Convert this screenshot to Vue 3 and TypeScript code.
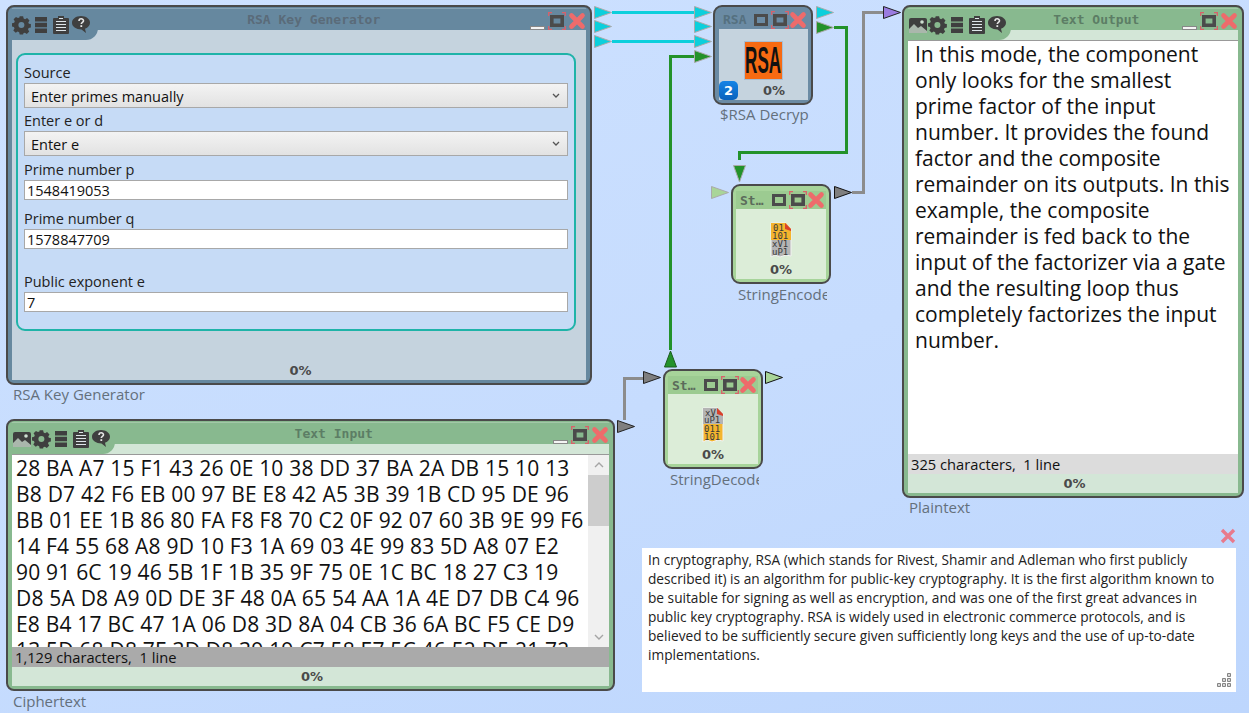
<template>
  <div class="canvas">
    <!-- wires and ports -->
    <svg class="wires" width="1249" height="713">
      <g fill="none" stroke-width="3">
        <path d="M612 12.5H694M612 41.5H694" stroke="#0ccfdc" />
        <path d="M670.5 350V56.5H694M834 27.5H846.5V152.5H739.5V160" stroke="#23922a" />
        <path d="M852 192.5H863.5V12.5H883M624.5 420V378.5H643" stroke="#8c8c8c" />
      </g>
      <polygon v-for="p in ports" :key="p.id" :points="p.points" :fill="p.fill" :stroke="p.stroke" stroke-width="1" />
    </svg>

    <!-- RSA Key Generator -->
    <section class="win blue key-win">
      <header class="win-head">
        <div class="tab">
          <svg class="ic"><use href="#i-gear" /></svg>
          <svg class="ic narrow"><use href="#i-bars" /></svg>
          <svg class="ic"><use href="#i-clip" /></svg>
          <svg class="ic wide"><use href="#i-help" /></svg>
        </div>
        <div class="title">RSA Key Generator</div>
        <div class="controls">
          <span class="min"></span>
          <svg class="ic ctl"><use href="#i-max" /></svg>
          <svg class="ic ctl"><use href="#i-close" /></svg>
        </div>
      </header>
      <div class="win-body">
        <div class="settings">
          <label>Source</label>
          <div class="select">Enter primes manually<svg width="8" height="6"><path d="M1 1l3 3 3-3" fill="none" stroke="#555" stroke-width="1.3" /></svg></div>
          <label>Enter e or d</label>
          <div class="select last">Enter e<svg width="8" height="6"><path d="M1 1l3 3 3-3" fill="none" stroke="#555" stroke-width="1.3" /></svg></div>
          <label>Prime number p</label>
          <div class="input">1548419053</div>
          <label>Prime number q</label>
          <div class="input">1578847709</div>
          <label class="spaced">Public exponent e</label>
          <div class="input">7</div>
        </div>
      </div>
      <footer class="progress">0%</footer>
    </section>
    <div class="caption key-cap">RSA Key Generator</div>

    <!-- Text Input -->
    <section class="win green input-win">
      <header class="win-head">
        <div class="tab">
          <svg class="ic"><use href="#i-image" /></svg>
          <svg class="ic"><use href="#i-gear" /></svg>
          <svg class="ic narrow"><use href="#i-bars" /></svg>
          <svg class="ic"><use href="#i-clip" /></svg>
          <svg class="ic wide"><use href="#i-help" /></svg>
        </div>
        <div class="title">Text Input</div>
        <div class="controls">
          <span class="min"></span>
          <svg class="ic ctl"><use href="#i-max" /></svg>
          <svg class="ic ctl"><use href="#i-close" /></svg>
        </div>
      </header>
      <div class="strip"></div>
      <div class="text-area">
        <div class="lines cipher">
          <div v-for="line in cipherLines" :key="line">{{ line }}</div>
        </div>
        <div class="scrollbar">
          <svg width="10" height="6" class="arrow"><path d="M1 5l4-4 4 4" fill="none" stroke="#a5a5a5" stroke-width="1.4" /></svg>
          <div class="track"><div class="thumb"></div></div>
          <svg width="10" height="6" class="arrow"><path d="M1 1l4 4 4-4" fill="none" stroke="#a5a5a5" stroke-width="1.4" /></svg>
        </div>
      </div>
      <div class="status dark">1,129 characters,&nbsp; 1 line</div>
      <footer class="progress">0%</footer>
    </section>
    <div class="caption input-cap">Ciphertext</div>

    <!-- Text Output -->
    <section class="win green output-win">
      <header class="win-head">
        <div class="tab">
          <svg class="ic"><use href="#i-image" /></svg>
          <svg class="ic"><use href="#i-gear" /></svg>
          <svg class="ic narrow"><use href="#i-bars" /></svg>
          <svg class="ic"><use href="#i-clip" /></svg>
          <svg class="ic wide"><use href="#i-help" /></svg>
        </div>
        <div class="title">Text Output</div>
        <div class="controls">
          <span class="min"></span>
          <svg class="ic ctl"><use href="#i-max" /></svg>
          <svg class="ic ctl"><use href="#i-close" /></svg>
        </div>
      </header>
      <div class="strip"></div>
      <div class="text-area output-text">
        <div class="lines">
          <div v-for="line in plainLines" :key="line">{{ line }}</div>
        </div>
      </div>
      <div class="status">325 characters,&nbsp; 1 line</div>
      <footer class="progress">0%</footer>
    </section>
    <div class="caption output-cap">Plaintext</div>

    <!-- RSA node -->
    <section class="node blue rsa-node">
      <header class="node-head">
        <span class="node-title">RSA</span>
        <svg class="ic box"><use href="#i-box" /></svg>
        <svg class="ic ctl"><use href="#i-max" /></svg>
        <svg class="ic ctl"><use href="#i-close" /></svg>
      </header>
      <div class="node-body">
        <div class="rsa-logo"><span>RSA</span></div>
        <span class="badge">2</span>
        <div class="pct">0%</div>
      </div>
    </section>
    <div class="caption node-cap rsa-cap">$RSA Decryp</div>

    <!-- StringEncoder node -->
    <section class="node green enc-node">
      <header class="node-head">
        <span class="node-title">St…</span>
        <svg class="ic box"><use href="#i-box" /></svg>
        <svg class="ic ctl"><use href="#i-max" /></svg>
        <svg class="ic ctl"><use href="#i-close" /></svg>
      </header>
      <div class="node-body">
        <svg class="file" width="22" height="36" viewBox="0 0 22 36">
          <path d="M1 1H16L21 7V34L16 33L10 35L5 33L1 35Z" fill="#b4b4b4" stroke="#f2f2f2" />
          <path d="M1 1H16L21 7V18H1Z" fill="#f4b52e" />
          <path d="M15 1L21 7V9L15 7Z" fill="#d9412b" />
          <g class="file-text"><text x="3" y="9">01</text><text x="2" y="17">101</text><text x="2" y="25">xV1</text><text x="2" y="33">uP1</text></g>
        </svg>
        <div class="pct">0%</div>
      </div>
    </section>
    <div class="caption node-cap enc-cap">StringEncoder</div>

    <!-- StringDecoder node -->
    <section class="node green dec-node">
      <header class="node-head">
        <span class="node-title">St…</span>
        <svg class="ic box"><use href="#i-box" /></svg>
        <svg class="ic ctl"><use href="#i-max" /></svg>
        <svg class="ic ctl"><use href="#i-close" /></svg>
      </header>
      <div class="node-body">
        <svg class="file" width="22" height="36" viewBox="0 0 22 36">
          <path d="M1 1H16L21 7V34L16 33L10 35L5 33L1 35Z" fill="#f4b52e" stroke="#f2f2f2" />
          <path d="M1 1H16L21 7V17H1Z" fill="#b4b4b4" />
          <path d="M15 1L21 7V9L15 7Z" fill="#d9412b" />
          <g class="file-text"><text x="3" y="9">xV</text><text x="2" y="16">uP1</text><text x="2" y="25">011</text><text x="2" y="33">101</text></g>
        </svg>
        <div class="pct">0%</div>
      </div>
    </section>
    <div class="caption node-cap dec-cap">StringDecoder</div>

    <!-- note -->
    <svg class="note-close" width="16" height="16" viewBox="0 0 16 16"><path d="M2 2l12 12M14 2L2 14" stroke="#e87a8c" stroke-width="3.4" /></svg>
    <div class="note">
      <div v-for="line in noteLines" :key="line">{{ line }}</div>
      <svg class="grip" width="14" height="14" viewBox="0 0 14 14">
        <path d="M10.500.5h3v3h-3zM5.500 5.500h3v3h-3zM10.500 5.500h3v3h-3zM.5 10.500h3v3h-3zM5.500 10.500h3v3h-3zM10.500 10.500h3v3h-3z" fill="#d8d8d8" stroke="#858585" />
      </svg>
    </div>

    <!-- icon sheet -->
    <svg width="0" height="0" class="sheet">
      <defs>
        <symbol id="i-gear" viewBox="0 0 20 20">
          <path fill-rule="evenodd" fill="#3f3f3f" d="M8 1h4l.6 2.6 1.700.7 2.300-1.400 2.800 2.800-1.400 2.300.7 1.700 2.300.3v4l-2.600.6-.7 1.700 1.400 2.300-2.800 2.800-2.300-1.400-1.700.7L12 22H8l-.6-2.600-1.700-.7-2.300 1.400L.6 17.300 2 15l-.7-1.700L-1 12.700V9l2.600-.6.7-1.700L.9 4.400 3.700 1.600 6 3l1.700-.7Z M10 7.500a3.500 3.500 0 1 0 0 7 3.500 3.500 0 0 0 0-7Z" transform="translate(.8 .5) scale(.86)" />
        </symbol>
        <symbol id="i-bars" viewBox="0 0 14 20">
          <path fill="#3f3f3f" d="M1 2h12v4.500H1zM1 7.700h12v4.500H1zM1 13.400h12v4.500H1z" />
        </symbol>
        <symbol id="i-clip" viewBox="0 0 20 20">
          <path fill="#3f3f3f" d="M3 3h4V1h6v2h4a1 1 0 0 1 1 1v14a1 1 0 0 1-1 1H3a1 1 0 0 1-1-1V4a1 1 0 0 1 1-1Z" />
          <path stroke="#dfe6ea" stroke-width="1" d="M5 6.500h10M5 9.500h10M5 12.500h10M5 15.500h10M8 3.500h4" />
        </symbol>
        <symbol id="i-help" viewBox="0 0 20 20">
          <path fill="#3f3f3f" d="M10 1c5 0 9 2.900 9 6.700 0 2.700-2 4.900-5 6l1 4.300-4.500-3.600C5 14.400 1 11.500 1 7.700 1 3.900 5 1 10 1Z" />
          <path fill="none" stroke="#e6e6e6" stroke-width="1.6" d="M8 6c0-3 4.500-2.800 4.500-.3 0 1.700-2.200 1.700-2.200 3.400" />
          <path fill="#e6e6e6" d="M9.400 10.200h1.800V12H9.400z" />
        </symbol>
        <symbol id="i-image" viewBox="0 0 20 20">
          <path fill="#3f3f3f" d="M1 5a2 2 0 0 1 2-2h14a2 2 0 0 1 2 2v13H1Z" />
          <path fill="#cfe0d2" d="M1 14l5-5 4 4 3-2 6 5v2H1Z" opacity=".75" />
          <circle cx="14" cy="7" r="1.8" fill="#cfe0d2" />
        </symbol>
        <symbol id="i-box" viewBox="0 0 14 14">
          <path fill="none" stroke="#4b4b4b" stroke-width="3" d="M1.500 2.500h11v9h-11z" />
        </symbol>
        <symbol id="i-max" viewBox="0 0 18 18">
          <path fill="none" stroke="#4b4b4b" stroke-width="3.6" d="M3.800 4.800h10.400v8.400H3.800z" />
          <path fill="none" stroke="#d9616a" stroke-width="1.3" d="M.7 4V.7H4M14 .7h3.300V4M.7 14v3.300H4M14 17.300h3.300V14" />
        </symbol>
        <symbol id="i-close" viewBox="0 0 18 18">
          <path stroke="#ee6b6b" stroke-width="4.6" stroke-linecap="round" d="M3.500 3.500l11 11M14.500 3.500l-11 11" />
        </symbol>
      </defs>
    </svg>
  </div>
</template>

<script setup lang="ts">
interface Port {
  id: string;
  points: string;
  fill: string;
  stroke: string;
}

const CYAN = '#0ccfdc';
const GREEN = '#23922a';
const PALE = '#a9d598';
const GREY = '#7f7f7f';

// right-pointing triangle: x is the left edge, y the centre line
const right = (id: string, x: number, y: number, fill: string, stroke = '#aaaaaa'): Port => ({
  id,
  points: `${x},${y - 6} ${x + 17},${y} ${x},${y + 6}`,
  fill,
  stroke
});

const ports: Port[] = [
  right('key-1', 594.5, 12.5, CYAN),
  right('key-2', 594.5, 26.5, CYAN),
  right('key-3', 594.5, 41.5, CYAN),
  right('rsa-in-1', 694.5, 12.5, CYAN),
  right('rsa-in-2', 694.5, 26.5, CYAN),
  right('rsa-in-3', 694.5, 41.5, CYAN),
  right('rsa-in-4', 694.5, 56.5, GREEN),
  right('rsa-out-1', 816.5, 12.5, CYAN),
  right('rsa-out-2', 816.5, 27.5, GREEN),
  right('out-in', 883.5, 12.5, '#9a7be0', '#222222'),
  right('enc-in', 711.5, 192.5, PALE),
  right('enc-out', 834.5, 192.5, GREY, '#111111'),
  right('dec-in', 643.5, 377.5, GREY, '#222222'),
  right('dec-out', 765.5, 377.5, PALE, '#111111'),
  right('txt-out', 617.5, 426.5, GREY, '#222222'),
  { id: 'enc-key', points: '733.5,165.5 745.5,165.5 739.5,182', fill: GREEN, stroke: '#aaaaaa' },
  { id: 'dec-key', points: '664.5,367 676.5,367 670.5,351', fill: GREEN, stroke: '#1c5c20' }
];

const cipherLines = [
  '28 BA A7 15 F1 43 26 0E 10 38 DD 37 BA 2A DB 15 10 13',
  'B8 D7 42 F6 EB 00 97 BE E8 42 A5 3B 39 1B CD 95 DE 96',
  'BB 01 EE 1B 86 80 FA F8 F8 70 C2 0F 92 07 60 3B 9E 99 F6',
  '14 F4 55 68 A8 9D 10 F3 1A 69 03 4E 99 83 5D A8 07 E2',
  '90 91 6C 19 46 5B 1F 1B 35 9F 75 0E 1C BC 18 27 C3 19',
  'D8 5A D8 A9 0D DE 3F 48 0A 65 54 AA 1A 4E D7 DB C4 96',
  'E8 B4 17 BC 47 1A 06 D8 3D 8A 04 CB 36 6A BC F5 CE D9',
  '13 5D 68 D8 7E 3D D8 39 19 C7 58 E7 5C 46 52 D5 21 72'
];

const plainLines = [
  'In this mode, the component',
  'only looks for the smallest',
  'prime factor of the input',
  'number. It provides the found',
  'factor and the composite',
  'remainder on its outputs. In this',
  'example, the composite',
  'remainder is fed back to the',
  'input of the factorizer via a gate',
  'and the resulting loop thus',
  'completely factorizes the input',
  'number.'
];

const noteLines = [
  'In cryptography, RSA (which stands for Rivest, Shamir and Adleman who first publicly',
  'described it) is an algorithm for public-key cryptography. It is the first algorithm known to',
  'be suitable for signing as well as encryption, and was one of the first great advances in',
  'public key cryptography. RSA is widely used in electronic commerce protocols, and is',
  'believed to be sufficiently secure given sufficiently long keys and the use of up-to-date',
  'implementations.'
];
</script>

<style>
html,
body {
  margin: 0;
  height: 100%;
  overflow: hidden;
}
</style>

<style scoped>
.canvas {
  position: relative;
  width: 1249px;
  height: 713px;
  overflow: hidden;
  background: linear-gradient(160deg, #cde1ff 0%, #c6dcfe 55%, #bdd6fd 100%);
  font-family: "Open Sans", "Noto Sans", sans-serif;
  color: #111;
}

.wires {
  position: absolute;
  left: 0;
  top: 0;
}

.sheet {
  position: absolute;
}

/* windows */
.win {
  position: absolute;
  box-sizing: border-box;
  display: flex;
  flex-direction: column;
  border: 2px solid #4a4a4a;
  border-radius: 8px;
  padding: 0 4px 3px;
}

.win.blue {
  background: #66889f;
}

.win.green {
  background: #88b98f;
}

.key-win {
  left: 6px;
  top: 5px;
  width: 586px;
  height: 380px;
}

.input-win {
  left: 6px;
  top: 419px;
  width: 609px;
  height: 272px;
}

.output-win {
  left: 902px;
  top: 5px;
  width: 342px;
  height: 493px;
}

.win-head {
  flex: none;
  height: 21px;
  display: flex;
  align-items: flex-start;
  border-top: 1px solid rgba(255, 255, 255, 0.22);
  margin-top: 1px;
}

.tab {
  flex: none;
  display: flex;
  align-items: flex-start;
  height: 31px;
  box-sizing: border-box;
  padding: 6px 6px 0 0;
  border-bottom-right-radius: 12px;
  position: relative;
  z-index: 1;
}

.green .tab {
  padding-right: 3px;
  background: #88b98f;
}

.blue .tab {
  background: #66889f;
}

.ic {
  display: block;
  width: 20px;
  height: 20px;
  flex: none;
}

.ic.narrow {
  width: 14px;
  margin: 0 3px 0 2px;
}

.ic.wide {
  width: 22px;
  margin-left: -1px;
}

.ic.ctl {
  width: 18px;
  height: 18px;
}

.ic.box {
  width: 14px;
  height: 14px;
  margin-right: 3px;
}

.title {
  flex: 1;
  min-width: 0;
  margin-top: 3px;
  text-align: center;
  font: bold 13px "DejaVu Sans Mono", monospace;
  color: #5a6b79;
}

.green .title {
  color: #5c7d65;
}

.controls {
  flex: none;
  display: flex;
  align-items: flex-start;
  gap: 2px;
  padding: 3px 0.5px 0 0;
}

.min {
  width: 13px;
  height: 2px;
  margin: 14px 1px 0 0;
  background: #f4f4f4;
  border: 0.5px solid #888;
}

.win-body {
  flex: 1;
  min-height: 0;
  background: #c5d3de;
  padding: 23px 10px 0 4px;
}

.settings {
  box-sizing: border-box;
  height: 278px;
  padding: 7px 6px 0;
  background: #c6dbf6;
  border: 2px solid #1fb3a8;
  border-radius: 9px;
}

.settings label {
  display: block;
  height: 21px;
  line-height: 21px;
  font-size: 14.5px;
  color: #222;
}

.settings .spaced {
  margin-top: 22px;
}

.select,
.input {
  box-sizing: border-box;
  border: 1.5px solid #a8a8a8;
  width: 544px;
  font-size: 14.5px;
}

.select {
  height: 25px;
  margin: 0 0 2px;
  padding: 1px 7px 0 6px;
  display: flex;
  align-items: center;
  justify-content: space-between;
  background: linear-gradient(#f3f3f3, #e2e2e2);
}

.select.last {
  margin-bottom: 3px;
}

.input {
  height: 20px;
  line-height: 19px;
  padding: 0 2px;
  margin-bottom: 8px;
  background: #fff;
}

.progress {
  flex: none;
  height: 19px;
  padding-left: 3px;
  text-align: center;
  font: bold 13px/19px "DejaVu Sans", sans-serif;
  color: #4a4a4a;
}

.win.blue .progress {
  background: #c5d3de;
}

.win.green .progress {
  background: #d3e6d7;
}

.strip {
  flex: none;
  height: 10px;
  background: #d3e6d7;
}

.text-area {
  flex: 1;
  min-height: 0;
  display: flex;
  overflow: hidden;
  background: #fff;
  border-top: 1px solid #999;
}

.lines {
  flex: 1;
  min-width: 0;
  padding: 0 0 0 7px;
  font-size: 21px;
  line-height: 26px;
  white-space: nowrap;
}

.lines.cipher {
  padding-left: 4px;
  letter-spacing: 0.2px;
}

.scrollbar {
  flex: none;
  width: 21px;
  display: flex;
  flex-direction: column;
  align-items: center;
  background: #f0f0f0;
}

.arrow {
  flex: none;
  margin: 7px 0;
}

.track {
  flex: 1;
  width: 100%;
}

.thumb {
  height: 51px;
  background: #cdcdcd;
}

.status {
  flex: none;
  height: 20px;
  line-height: 20px;
  padding-left: 3px;
  font-size: 14.7px;
  background: #dcdcdc;
}

.status.dark {
  background: #aaaaaa;
}

/* small nodes */
.node {
  position: absolute;
  box-sizing: border-box;
  display: flex;
  flex-direction: column;
  border: 2px solid #4a4a4a;
  border-radius: 9px;
  width: 100px;
  height: 100px;
  padding: 5px 3px 3px;
}

.node.blue {
  background: #6b8ba4;
  padding: 3px 3px 3px 4px;
}

.node.green {
  background: #a7d49a;
}

.rsa-node {
  left: 713px;
  top: 5px;
}

.enc-node {
  left: 731px;
  top: 184px;
}

.dec-node {
  left: 663px;
  top: 369px;
}

.node-head {
  flex: none;
  height: 18px;
  display: flex;
  align-items: center;
  padding: 0 1px 0 4px;
}

.blue .node-head {
  height: 19px;
}

.green .node-head {
  background: #9ccb91;
}

.node-title {
  flex: 1;
  min-width: 0;
  font: bold 13px "DejaVu Sans Mono", monospace;
  color: #55707f;
  white-space: nowrap;
}

.green .node-title {
  color: #5b6b5b;
}

.node-body {
  position: relative;
  flex: 1;
  min-height: 0;
  display: flex;
  flex-direction: column;
  align-items: center;
  padding-top: 13px;
}

.blue .node-body {
  background: #c5d3de;
  padding-top: 12px;
}

.green .node-body {
  background: #dcedd8;
}

.file {
  flex: none;
  display: block;
}

.file-text {
  font: 9px "DejaVu Sans Mono", monospace;
  fill: #3a3a3a;
}

.pct {
  margin-top: 4px;
  font: bold 13px "DejaVu Sans", sans-serif;
  color: #4a4a4a;
}

.rsa-logo {
  flex: none;
  width: 39px;
  height: 39px;
  box-sizing: border-box;
  display: flex;
  justify-content: center;
  overflow: hidden;
  background: #f76a12;
  border: 1px solid #a9bdd2;
}

.rsa-logo span {
  flex: none;
  display: block;
  font: bold 37px/37px "Liberation Sans", sans-serif;
  color: #111;
  transform: scaleX(0.46);
}

.rsa-node .pct {
  margin: 3px 0 0 21px;
}

.badge {
  position: absolute;
  left: 0;
  bottom: 0;
  width: 19px;
  height: 19px;
  border-radius: 5px;
  text-align: center;
  font: bold 13px/19px "DejaVu Sans", sans-serif;
  color: #fff;
  background: linear-gradient(#1684e6, #0a62bc);
}

/* captions under the boxes */
.caption {
  position: absolute;
  font-size: 15px;
  line-height: 19px;
  color: #64707c;
  white-space: nowrap;
}

.key-cap {
  left: 13px;
  top: 385px;
}

.input-cap {
  left: 13px;
  top: 692px;
}

.output-cap {
  left: 909px;
  top: 498px;
}

.node-cap {
  overflow: hidden;
}

.rsa-cap {
  left: 720px;
  top: 105px;
  width: 90px;
}

.enc-cap {
  left: 738px;
  top: 285px;
  width: 89px;
}

.dec-cap {
  left: 670px;
  top: 470px;
  width: 89px;
}

/* note */
.note-close {
  position: absolute;
  left: 1220px;
  top: 528px;
}

.note {
  position: absolute;
  box-sizing: border-box;
  left: 642px;
  top: 548px;
  width: 594px;
  height: 144px;
  padding: 2px 6px;
  background: #fff;
  font-size: 13.7px;
  line-height: 19px;
  color: #222;
  white-space: nowrap;
}

.grip {
  position: absolute;
  right: 5px;
  bottom: 5px;
}
</style>
